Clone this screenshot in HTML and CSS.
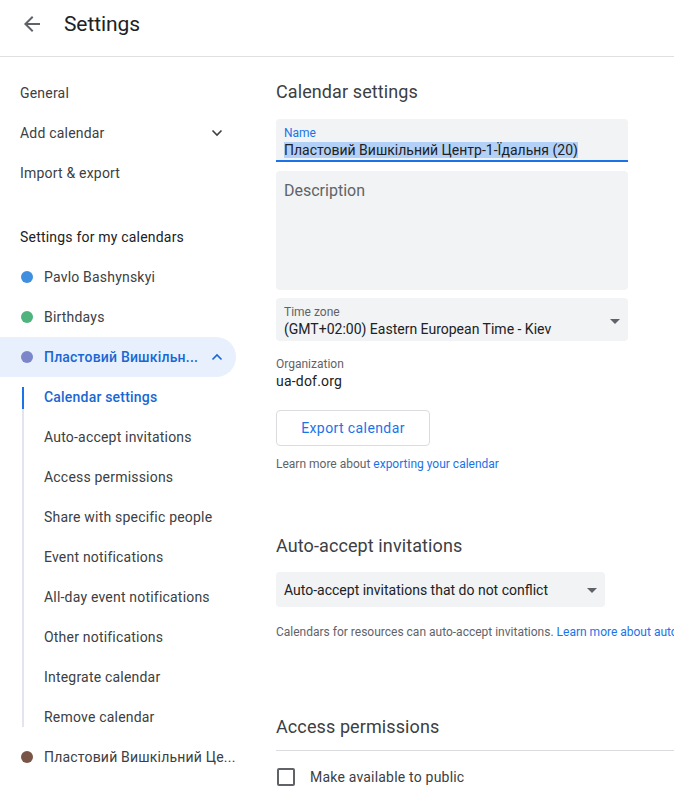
FILE: index.html
```html
<!DOCTYPE html>
<html>
<head>
<meta charset="utf-8">
<link rel="stylesheet" href="styles.css">
</head>
<body>
<header class="topbar">
  <span class="back">
    <svg width="24" height="24" viewBox="0 0 24 24"><path d="M20 11H7.83l5.59-5.59L12 4l-8 8 8 8 1.41-1.41L7.83 13H20v-2z" fill="#5f6368"/></svg>
  </span>
  <h1 class="title">Settings</h1>
</header>
<div class="layout">
  <nav class="sidebar">
    <div class="nav-item">General</div>
    <div class="nav-item">Add calendar
      <svg class="chev" width="12" height="8" viewBox="0 0 12 8"><path d="M1.5 1.5 6 6l4.5-4.5" fill="none" stroke="#3c4043" stroke-width="1.6"/></svg>
    </div>
    <div class="nav-item">Import &amp; export</div>
    <div class="nav-section">Settings for my calendars</div>
    <div class="nav-item cal"><span class="dot dot-blue"></span><span class="cal-name">Pavlo Bashynskyi</span></div>
    <div class="nav-item cal"><span class="dot dot-green"></span><span class="cal-name">Birthdays</span></div>
    <div class="nav-item cal active"><span class="dot dot-purple"></span><span class="cal-name">Пластовий Вишкільн...</span>
      <svg class="chev" width="12" height="8" viewBox="0 0 12 8"><path d="M1.5 6.5 6 2l4.5 4.5" fill="none" stroke="#1967d2" stroke-width="1.6"/></svg>
    </div>
    <div class="sub-list">
      <div class="sub-item current">Calendar settings</div>
      <div class="sub-item">Auto-accept invitations</div>
      <div class="sub-item">Access permissions</div>
      <div class="sub-item">Share with specific people</div>
      <div class="sub-item">Event notifications</div>
      <div class="sub-item">All-day event notifications</div>
      <div class="sub-item">Other notifications</div>
      <div class="sub-item">Integrate calendar</div>
      <div class="sub-item">Remove calendar</div>
    </div>
    <div class="nav-item cal"><span class="dot dot-brown"></span><span class="cal-name">Пластовий Вишкільний Це...</span></div>
  </nav>
  <main class="main">
    <h2 class="sec-title">Calendar settings</h2>
    <div class="field name-field">
      <div class="field-label blue">Name</div>
      <div class="field-value"><span class="sel">Пластовий Вишкільний Центр-1-Їдальня (20)</span></div>
    </div>
    <div class="field desc-field">Description</div>
    <div class="field tz-field">
      <div class="field-label">Time zone</div>
      <div class="field-value">(GMT+02:00) Eastern European Time - Kiev</div>
      <span class="caret"></span>
    </div>
    <div class="org">
      <div class="org-label">Organization</div>
      <div class="org-value">ua-dof.org</div>
    </div>
    <button class="btn">Export calendar</button>
    <p class="help">Learn more about <a class="link">exporting your calendar</a></p>

    <h2 class="sec-title sec-auto">Auto-accept invitations</h2>
    <div class="select">Auto-accept invitations that do not conflict<span class="caret"></span></div>
    <p class="help help-nowrap">Calendars for resources can auto-accept invitations. <a class="link">Learn more about auto</a></p>

    <h2 class="sec-title sec-access">Access permissions</h2>
    <div class="divider"></div>
    <label class="check-row"><span class="checkbox"></span>Make available to public</label>
  </main>
</div>
</body>
</html>
```
FILE: styles.css
```css
* { box-sizing: border-box; }
html, body { margin: 0; padding: 0; }
body {
  font-family: Roboto, "Noto Sans", Arial, sans-serif;
  color: #3c4043;
  background: #fff;
  width: 674px;
  height: 793px;
  overflow: hidden;
}
.topbar {
  height: 57px;
  border-bottom: 1px solid #e0e0e0;
  display: flex;
  align-items: center;
  padding: 0 0 8px 20px;
}
.back { width: 24px; height: 24px; display: flex; margin-right: 20px; }
.title {
  margin: 0;
  font-weight: 400;
  font-size: 21px;
  color: #202124;
  letter-spacing: -0.1px;
}
.layout { display: flex; }
.sidebar {
  width: 236px;
  flex: none;
  padding-top: 16px;
}
.nav-item {
  height: 40px;
  display: flex;
  align-items: center;
  padding-left: 20px;
  padding-right: 12px;
  font-size: 14px;
  color: #3c4043;
  letter-spacing: 0.2px;
}
.nav-item .chev { margin-left: auto; margin-right: 1px; }
.nav-section {
  margin-top: 24px;
  height: 40px;
  display: flex;
  align-items: center;
  padding-left: 20px;
  font-size: 14px;
  color: #202124;
  letter-spacing: 0.2px;
}
.cal .dot {
  width: 12px; height: 12px; border-radius: 50%;
  margin-left: 1px;
  margin-right: 11px;
  flex: none;
}
.dot-blue { background: #3f8ee0; }
.dot-green { background: #4fb37d; }
.dot-purple { background: #7c86c9; }
.dot-brown { background: #795548; }
.cal-name { white-space: nowrap; }
.cal.active {
  background: #e8f0fe;
  border-radius: 0 20px 20px 0;
  color: #1967d2;
  font-weight: 500;
}
.sub-list {
  position: relative;
  padding-left: 44px;
}
.sub-list::before {
  content: "";
  position: absolute;
  left: 22px;
  top: 10px;
  bottom: 10px;
  width: 2px;
  background: #e3e5ee;
}
.sub-item {
  position: relative;
  height: 40px;
  display: flex;
  align-items: center;
  font-size: 14px;
  color: #3c4043;
  letter-spacing: 0.2px;
}
.sub-item.current { color: #1967d2; font-weight: 500; }
.sub-item.current::before {
  content: "";
  position: absolute;
  left: -22px;
  top: 10px;
  height: 22px;
  width: 2px;
  background: #1a73e8;
}
.main {
  margin-left: 40px;
  flex: 1;
  min-width: 0;
  padding-top: 23px;
}
.sec-title {
  margin: 0;
  font-weight: 400;
  font-size: 18px;
  line-height: 24px;
  color: #3c4043;
  letter-spacing: 0.1px;
}
.field {
  width: 352px;
  background: #f1f3f4;
  border-radius: 4px 4px 0 0;
  position: relative;
}
.name-field {
  margin-top: 15px;
  height: 43px;
  border-bottom: 2px solid #1a73e8;
  padding: 6px 8px 0;
}
.field-label {
  font-size: 12px;
  line-height: 16px;
  color: #5f6368;
}
.field-label.blue { color: #1a73e8; }
.field-value {
  font-size: 14px;
  line-height: 18px;
  color: #202124;
  letter-spacing: 0;
  white-space: nowrap;
}
.sel { background: #b3d1f6; }
.desc-field {
  margin-top: 9px;
  height: 119px;
  border-radius: 4px;
  padding: 11px 8px 0;
  font-size: 16px;
  line-height: 18px;
  color: #5f6368;
}
.tz-field {
  margin-top: 8px;
  height: 43px;
  border-radius: 4px;
  padding: 6px 8px 0;
}
.caret {
  position: absolute;
  right: 8px;
  top: 50%;
  margin-top: -2px;
  width: 0; height: 0;
  border-left: 5px solid transparent;
  border-right: 5px solid transparent;
  border-top: 5px solid #5f6368;
}
.tz-field .caret { margin-top: -1px; }
.org { margin-top: 15px; }
.org-label { font-size: 12px; line-height: 16px; color: #5f6368; }
.org-value { font-size: 14px; line-height: 18px; color: #202124; letter-spacing: 0.2px; }
.btn {
  margin-top: 20px;
  display: block;
  width: 154px;
  height: 36px;
  background: #fff;
  border: 1px solid #dadce0;
  border-radius: 4px;
  font-family: inherit;
  font-size: 14px;
  font-weight: 400;
  color: #1a73e8;
  letter-spacing: 0.4px;
  padding: 0;
}
.help {
  margin: 10px 0 0;
  font-size: 12px;
  line-height: 16px;
  color: #5f6368;
}
.help-nowrap { white-space: nowrap; overflow: hidden; margin-top: 17px; }
.link { color: #1a73e8; text-decoration: none; }
.sec-auto { margin-top: 62px; }
.select {
  position: relative;
  margin-top: 14px;
  width: 329px;
  height: 35px;
  background: #f1f3f4;
  border-radius: 4px;
  display: flex;
  align-items: center;
  padding: 0 8px;
  font-size: 14px;
  color: #202124;
  letter-spacing: 0;
}
.select .caret { right: 8px; }
.sec-access { margin-top: 75px; }
.divider { margin-top: 11px; height: 1px; background: #dadce0; }
.check-row {
  margin-top: 16px;
  display: flex;
  align-items: center;
  font-size: 14px;
  color: #3c4043;
  letter-spacing: 0.2px;
  height: 20px;
}
.checkbox {
  width: 18px; height: 18px;
  border: 2px solid #5f6368;
  border-radius: 2px;
  margin-left: 1px;
  margin-right: 15px;
  flex: none;
}
```
